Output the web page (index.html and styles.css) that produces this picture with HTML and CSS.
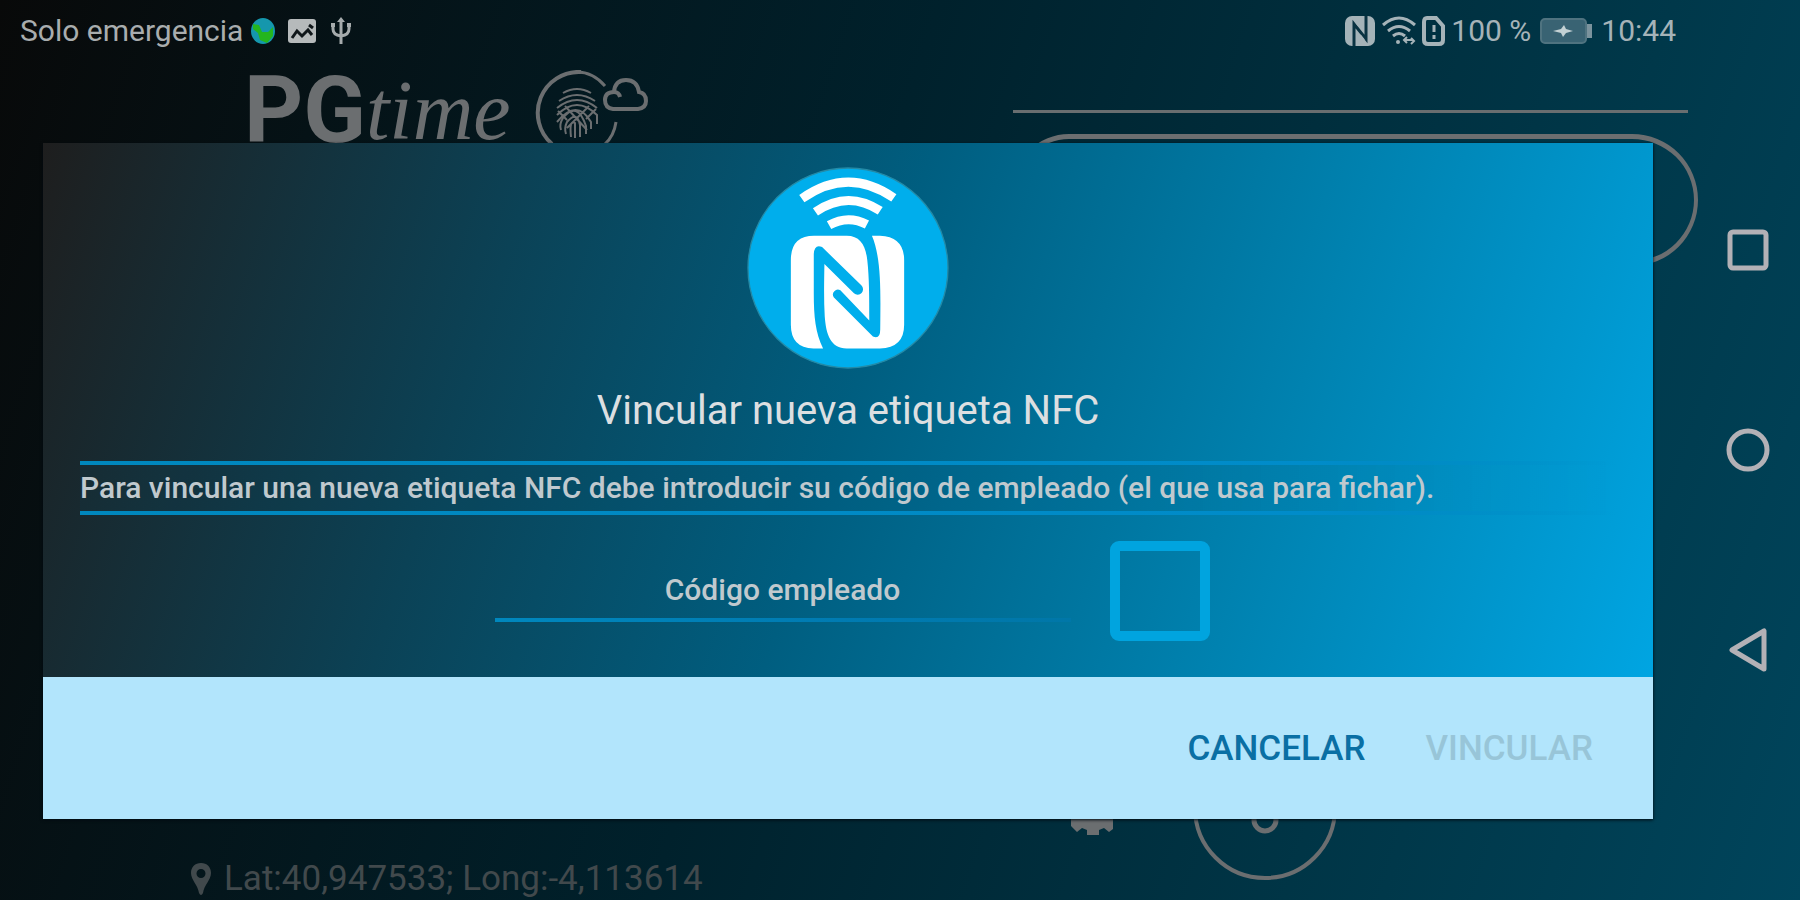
FILE: index.html
```html
<!DOCTYPE html>
<html lang="es">
<head>
<meta charset="utf-8">
<title>PGtime</title>
<link rel="stylesheet" href="styles.css">
</head>
<body>
<div class="screen">
  <header class="status">
    <div class="status-group">
      <span>Solo emergencia</span>
      <svg class="globe" width="26" height="34" viewBox="0 0 26 34"><ellipse cx="13" cy="17" rx="12" ry="13" fill="#1597ad"/><path d="M3 10l6 1 3 7 6 0 5-5v9l-6 7-7-3-2-7-5-4z" fill="#24b51f"/></svg>
      <svg class="picture" width="30" height="26" viewBox="0 0 30 26"><rect x="1" y="1" width="28" height="24" rx="3" fill="#b6babb"/><path d="M5 20l5-7 5 5 6-6 4 5M22 7l4 3" fill="none" stroke="#10171a" stroke-width="3"/></svg>
      <svg class="usb" width="22" height="30" viewBox="0 0 22 30" fill="none" stroke="#a6abac" stroke-width="3"><path d="M11 4v24M3 8v5q0 6 8 7q8-1 8-7V8"/><path d="M7 6l4-5 4 5zM1 7h4v4H1zM17 7h4v4h-4z" fill="#a6abac" stroke="none"/></svg>
    </div>
    <div class="status-group status-right">
      <svg width="32" height="32" viewBox="0 0 32 32"><rect x="1" y="1" width="30" height="30" rx="7" fill="#a5b3b8"/><path d="M10 31V9l12 15V1" fill="none" stroke="#0a3342" stroke-width="3"/><path d="M15 11l-3-4M20 25l-4-5" stroke="#a5b3b8" stroke-width="2"/></svg>
      <svg width="36" height="32" viewBox="0 0 36 32" fill="none" stroke="#a5b3b8" stroke-width="3"><path d="M2 10q16-14 32 0M7 16q11-9 22 0M12 21q6-5 12 0"/><circle cx="17" cy="27" r="2" fill="#a5b3b8" stroke="none"/><path d="M23 25h9M26 22l-3 3 3 3M30 23l3 3-3 3" stroke-width="2"/></svg>
      <svg width="24" height="32" viewBox="0 0 24 32" fill="none" stroke="#a5b3b8" stroke-width="4"><path d="M5 3h9l7 8v14q0 4-4 4H6q-4 0-4-4V7q0-4 3-4z"/><path d="M12 10v7M12 20v4" stroke-width="3"/></svg>
      <span>100 %</span>
      <svg class="battery" width="54" height="28" viewBox="0 0 54 28"><rect x="2" y="2" width="45" height="24" rx="4" fill="#396373" stroke="#4f7380" stroke-width="2"/><path d="M48 7h5v14h-5z" fill="#7b939d"/><path d="M14 14l8-2 3-4 2 4 7 2-7 2-3 4-2-4z" fill="#c3d1d4"/></svg>
      <span>10:44</span>
    </div>
  </header>

  <main class="app">
    <section class="app-left">
      <div class="logo">
        <span class="logo-pg">PG</span><span class="logo-time">time</span>
        <svg class="logo-mark" width="116" height="84" viewBox="0 0 116 84" fill="none" stroke="#6b6e70">
          <path d="M42 2Q58 2 70 16M81 52Q79 66 70 74" stroke-width="3"/>
          <path d="M46 2A41 41 0 0 0 17 74" stroke-width="4"/>
          <g stroke-width="2"><path d="M28 23q14-8 28 0M24 31q18-12 36 0M22 38q20-16 40 0M22 45q20-20 40 0v9M22 52q20-24 34 0v7M26 60q-2-6 2-12q14-18 23 8v8M31 64q-2-6 1-12q10-12 13 3v12M36 67q-2-18 4-14v15M23 41l9 9M61 39l-10 10M30 36l22 24M54 36L32 58"/></g>
          <path d="M78 39q-8-1-8-9q0-8 9-8q1-12 12-12t13 12q7 1 7 9q0 7-8 8zM79 22q5 0 6 5" stroke-width="4"/>
        </svg>
      </div>
      <p class="location">
        <svg width="22" height="34" viewBox="0 0 22 34"><path fill-rule="evenodd" d="M11 1C5 1 1 5 1 11c0 7 7 12 8 20q2 4 4 0c1-8 8-13 8-20C21 5 17 1 11 1zm0 6a4 4 0 1 1 0 9a4 4 0 0 1 0-9z" fill="#41494c"/></svg>
        <span>Lat:40,947533; Long:-4,113614</span>
      </p>
    </section>
    <section class="app-right">
      <hr class="rule">
      <div class="pill"></div>
      <div class="tools">
        <svg width="44" height="54" viewBox="0 0 44 54"><path d="M1 1h42v47l-4 3-5-4-5 2v5H17v-5l-5-2-5 4-6-6z" fill="#6b6e70"/></svg>
        <svg width="144" height="144" viewBox="0 0 144 144" fill="none" stroke="#6b6e70" stroke-width="4"><circle cx="72" cy="72" r="70"/><circle cx="72" cy="84" r="11" stroke-width="5"/></svg>
      </div>
    </section>
  </main>

  <nav class="sysnav">
    <button type="button" aria-label="Recientes"><svg width="44" height="44" viewBox="0 0 44 44"><rect x="4" y="4" width="36" height="36" rx="3"/></svg></button>
    <button type="button" aria-label="Inicio"><svg width="44" height="44" viewBox="0 0 44 44"><circle cx="22" cy="22" r="19"/></svg></button>
    <button type="button" aria-label="Atrás"><svg width="44" height="44" viewBox="0 0 44 44"><path d="M38 3v38L6 22z" stroke-linejoin="round"/></svg></button>
  </nav>

  <div class="overlay">
    <form class="dialog" role="dialog" aria-labelledby="dialog-title">
      <div class="dialog-body">
        <svg class="nfc" width="202" height="202" viewBox="50 50 608 608">
          <circle cx="354" cy="354" r="301" fill="#00aeec" stroke="#248aa6" stroke-width="4"/>
          <g fill="none" stroke="#fff" stroke-width="27"><path d="M215 145Q354 47 492 143M256 185Q354 118 451 182M297 225Q354 193 411 223"/></g>
          <path d="M252 257H350C390 257 407 285 412 330C418 385 418 440 418 512L331 421A15 15 0 0 0 311 442L429 560Q451 570 451 538C452 430 455 325 426 257H450Q523 260 523 330V525Q523 595 450 596H350C302 596 288 555 284 500C281 450 282 400 283 342L372 430A15 15 0 0 0 394 406L276 291Q253 281 251 312V430C251 500 256 550 279 596H250Q182 595 182 525V330Q182 257 252 257Z" fill="#fff"/>
        </svg>
        <h1 class="title" id="dialog-title">Vincular nueva etiqueta NFC</h1>
        <p class="info">Para vincular una nueva etiqueta NFC debe introducir su código de empleado (el que usa para fichar).</p>
        <div class="fields">
          <input class="code" type="text" placeholder="Código empleado" aria-label="Código empleado">
          <input class="check" type="checkbox" aria-label="Confirmar código">
        </div>
      </div>
      <div class="actions">
        <button class="action" type="button">CANCELAR</button>
        <button class="action" type="submit" disabled>VINCULAR</button>
      </div>
    </form>
  </div>
</div>
</body>
</html>
```
FILE: styles.css
```css
* { box-sizing: border-box; }

body {
  margin: 0;
  font-family: Roboto, "Liberation Sans", sans-serif;
}

button, input { font: inherit; margin: 0; }

svg { display: block; flex: none; }

.screen {
  position: relative;
  min-height: 100vh;
  display: grid;
  grid-template: 62px 1fr / 1fr 104px;
  background: linear-gradient(108deg, #080909 0%, #00212c 45%, #00384a 80%, #00455c 100%);
  overflow: hidden;
}

/* Status bar */
.status {
  display: flex;
  justify-content: space-between;
  align-items: center;
  padding: 0 20px;
  font-size: 30px;
  line-height: 62px;
  color: #a9adae;
}

.status-group { display: flex; align-items: center; gap: 7px; }
.status-right { gap: 5px; color: #a5b3b8; }
.picture { margin-left: 4px; }
.usb { margin-left: 6px; }
.battery { margin: 0 3px; }

/* Screen behind the dialog */
.app {
  grid-area: 2 / 1;
  display: grid;
  grid-template-columns: 1013fr 683fr;
}

.app-left {
  display: flex;
  flex-direction: column;
  justify-content: space-between;
  padding: 0 0 4px 190px;
}

.logo {
  display: flex;
  align-items: flex-start;
  padding-left: 54px;
  color: #6b6e70;
  line-height: 98px;
}

.logo-pg { font-size: 92px; font-weight: 700; }
.logo-time { font-family: "Liberation Serif", serif; font-size: 84px; font-style: italic; }
.logo-mark { margin: 8px 0 0 24px; }

.location {
  display: flex;
  align-items: center;
  gap: 12px;
  margin: 0;
  font-size: 35px;
  line-height: 34px;
  color: #41494c;
}

.app-right {
  display: flex;
  flex-direction: column;
  padding-right: 8px;
}

.rule {
  width: 100%;
  height: 3px;
  margin: 48px 0 0;
  border: 0;
  background: #696e70;
}

.pill {
  height: 132px;
  margin: 21px -10px 0 0;
  border: 4px solid #6b6e70;
  border-width: 5px 4px;
  border-radius: 56px 66px 66px 56px;
}

.tools {
  display: flex;
  align-items: center;
  gap: 79px;
  margin: auto 0 20px 57px;
}

/* System navigation */
.sysnav {
  grid-area: 1 / 2 / 3 / 3;
  display: flex;
  flex-direction: column;
  justify-content: center;
  align-items: center;
  gap: 156px;
}

.sysnav button { padding: 0; border: 0; background: none; }
.sysnav svg { fill: none; stroke: #b3b1b6; stroke-width: 5; }

/* Dialog */
.overlay {
  position: absolute;
  inset: 0;
  display: grid;
  padding: 143px 147px 81px 43px;
}

.dialog {
  display: flex;
  flex-direction: column;
  box-shadow: 0 1px 3px #000a10;
}

.dialog-body {
  flex: 1;
  display: flex;
  flex-direction: column;
  align-items: center;
  padding: 24px 37px 36px;
  background: linear-gradient(108deg, #1e1e1e 0%, #0b4256 28%, #005e80 50%, #0082b0 75%, #00a5e2 100%);
  color: #dcdfe1;
}

.title {
  margin: 18px 0 26px;
  font-size: 40px;
  font-weight: 400;
  line-height: 48px;
}

.info {
  align-self: stretch;
  margin: 0;
  border: solid;
  border-width: 4px 0;
  border-image: linear-gradient(90deg, #0087bd, #008cca 80%, #008cca00) 1;
  background: linear-gradient(90deg, #00507018 70%, #00507000);
  font-size: 30px;
  font-weight: 500;
  line-height: 46px;
  color: #c0c9ce;
}

.fields {
  display: flex;
  align-items: center;
  gap: 39px;
  margin-top: 26px;
  padding-left: 8px;
}

.code {
  width: 576px;
  height: 62px;
  padding: 0;
  border: 0;
  border-bottom: 4px solid;
  border-image: linear-gradient(90deg, #0087bd, #007bb2 60%, #0077a8) 1;
  background: none;
  color: #c0c9ce;
  font-size: 30px;
  font-weight: 500;
  text-align: center;
  outline: 0;
}

.code::placeholder { color: #c0c9ce; opacity: 1; }

.check {
  appearance: none;
  width: 100px;
  height: 100px;
  border: 10px solid #00a4df;
  border-radius: 9px;
}

.actions {
  display: flex;
  justify-content: flex-end;
  align-items: center;
  gap: 60px;
  min-height: 142px;
  padding: 2px 60px 0;
  background: #b2e5fc;
}

.action {
  padding: 0;
  border: 0;
  background: none;
  color: #0a6fa4;
  font-size: 35px;
  font-weight: 500;
  line-height: 48px;
}

.action:disabled { color: #98c5d8; }
```
